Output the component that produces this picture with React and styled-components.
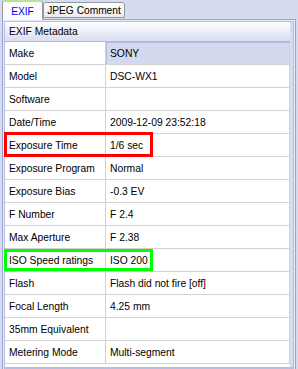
import React from "react";
import styled, { createGlobalStyle } from "styled-components";

const Global = createGlobalStyle`
  html, body { margin: 0; padding: 0; background: #d5dcf2; }
  body { font-family: "Liberation Sans", Arial, sans-serif; font-size: 10px; }
`;

const Frame = styled.div`
  width: 298px;
  height: 369px;
  background: #d5dcf2;
  display: flex;
  flex-direction: column;
  position: relative;
  overflow: hidden;
`;

const TabBar = styled.div`
  display: flex;
  align-items: flex-end;
  height: 19px;
  padding-left: 2px;
`;

const Tab = styled.div`
  box-sizing: border-box;
  height: ${(p) => (p.$active ? "20px" : "16px")};
  margin-bottom: ${(p) => (p.$active ? "-1px" : "1px")};
  width: ${(p) => p.$w}px;
  display: flex;
  align-items: center;
  justify-content: center;
  border: 1px solid #919b9c;
  border-bottom: ${(p) => (p.$active ? "none" : "1px solid #919b9c")};
  border-top: ${(p) => (p.$active ? "2px solid #b6e29c" : "1px solid #919b9c")};
  border-radius: 3px 3px 0 0;
  background: ${(p) =>
    p.$active ? "#fcfcfe" : "linear-gradient(#ffffff, #ecebe6)"};
  color: ${(p) => (p.$active ? "#0000ff" : "#000")};
  font-size: 10.2px;
  position: relative;
  z-index: ${(p) => (p.$active ? 2 : 1)};
`;

const Panel = styled.div`
  flex: 1;
  margin: 0 2px 0 2px;
  border: 1px solid #9aa3cf;
  border-bottom: none;
  background: #fcfcfe;
  display: flex;
  flex-direction: column;
  padding: 1px 1px 0 1px;
`;

const Inner = styled.div`
  flex: 1;
  border: 1px solid #b7bee0;
  border-bottom: 2px solid #b7bee0;
  display: flex;
  flex-direction: column;
  box-shadow: 0 0 0 1px #e9ecf8;
  padding-right: 3px;
  background: linear-gradient(to right, #fff calc(100% - 3px), #d5dcf2 calc(100% - 3px));
`;

const Header = styled.div`
  height: 19px;
  display: flex;
  align-items: center;
  padding-left: 4px;
  background: linear-gradient(#ffffff, #d9ddf1);
  border-bottom: 1px solid #b4b8d8;
  font-size: 10.3px;
  color: #000;
`;

const Row = styled.div`
  display: grid;
  grid-template-columns: 101px 1fr;
  height: 23px;
  box-sizing: border-box;
  border-bottom: 1px solid #d4d2cc;
  background: #fff;
`;

const Cell = styled.div`
  display: flex;
  align-items: center;
  padding-left: 4px;
  font-size: 10.3px;
  color: #000;
  white-space: nowrap;
  overflow: hidden;
  border-right: 1px solid #d4d2cc;
  background: ${(p) => (p.$selected ? "#d4d9ef" : "transparent")};
  box-shadow: ${(p) => (p.$selected ? "inset 1px 1px 0 #b6bcdc" : "none")};
`;

const Highlight = styled.div`
  position: absolute;
  left: ${(p) => p.$x}px;
  top: ${(p) => p.$y}px;
  width: ${(p) => p.$w}px;
  height: ${(p) => p.$h}px;
  box-sizing: border-box;
  border: 3px solid ${(p) => p.$color};
  pointer-events: none;
`;

const rows = [
  ["Make", "SONY", true],
  ["Model", "DSC-WX1"],
  ["Software", ""],
  ["Date/Time", "2009-12-09 23:52:18"],
  ["Exposure Time", "1/6 sec"],
  ["Exposure Program", "Normal"],
  ["Exposure Bias", "-0.3 EV"],
  ["F Number", "F 2.4"],
  ["Max Aperture", "F 2.38"],
  ["ISO Speed ratings", "ISO 200"],
  ["Flash", "Flash did not fire [off]"],
  ["Focal Length", "4.25 mm"],
  ["35mm Equivalent", ""],
  ["Metering Mode", "Multi-segment"],
];

export default function App() {
  return (
    <Frame>
      <Global />
      <TabBar>
        <Tab $active $w={41}>EXIF</Tab>
        <Tab $w={82}>JPEG Comment</Tab>
      </TabBar>
      <Panel>
        <Inner>
          <Header>EXIF Metadata</Header>
          {rows.map(([k, v, sel]) => (
            <Row key={k}>
              <Cell>{k}</Cell>
              <Cell $selected={sel}>{v}</Cell>
            </Row>
          ))}
        </Inner>
      </Panel>
      <Highlight $x={4} $y={132} $w={149} $h={25} $color="#ff0000" />
      <Highlight $x={4} $y={249} $w={149} $h={22} $color="#00ff00" />
    </Frame>
  );
}
